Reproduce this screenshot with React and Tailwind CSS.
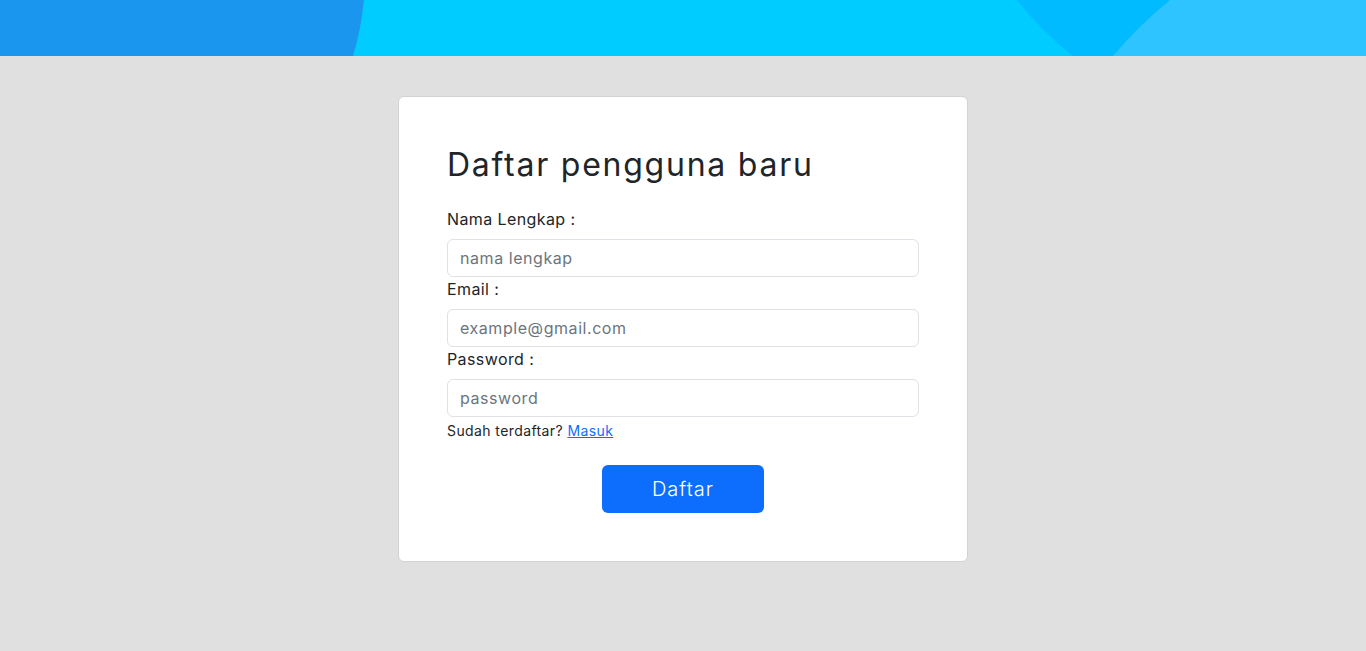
import React, { useState } from 'react';

const HeaderBanner = () => (
  <div className="h-14 w-full bg-[#00ccff] overflow-hidden">
    <svg width="100%" height="56" viewBox="0 0 1366 56" preserveAspectRatio="none" className="block">
      <path d="M0 0 H364 Q361 30 353 56 H0 Z" fill="#1a96ee" />
      <path d="M1017 0 Q1042 32 1073 56 H1366 V0 Z" fill="#00bbff" />
      <path d="M1170 0 Q1138 26 1113 56 H1366 V0 Z" fill="#2ec4ff" />
    </svg>
  </div>
);

const Field = ({ label, type, placeholder, value, onChange }) => (
  <div>
    <label className="block text-[16px] leading-6 mb-2 text-[#212529]">{label}</label>
    <input
      type={type}
      value={value}
      onChange={onChange}
      placeholder={placeholder}
      className="block w-full h-[38px] px-3 rounded-[6px] border border-[#dee2e6] bg-white text-[16px] text-[#212529] placeholder-[#6c757d] outline-none tracking-[0.035em]"
    />
  </div>
);

export default function App() {
  const [form, setForm] = useState({ nama: '', email: '', password: '' });

  const set = (key) => (e) => setForm((f) => ({ ...f, [key]: e.target.value }));

  return (
    <div className="min-h-[651px] bg-[#e0e0e0] font-['Inter','Open_Sans',sans-serif] text-[#212529] tracking-[0.025em]">
      <HeaderBanner />

      <div className="flex justify-center pt-10">
        <div className="w-[570px] bg-white border border-[#d3d3d3] rounded-[6px] p-12">
          <h1 className="text-[32px] leading-[40px] font-normal tracking-[0.055em] mb-[22px]">Daftar pengguna baru</h1>

          <Field label="Nama Lengkap :" type="text" placeholder="nama lengkap" value={form.nama} onChange={set('nama')} />
          <Field label="Email :" type="email" placeholder="example@gmail.com" value={form.email} onChange={set('email')} />
          <Field label="Password :" type="password" placeholder="password" value={form.password} onChange={set('password')} />

          <p className="text-[14px] leading-[21px] mt-[3px]">
            Sudah terdaftar? <a href="#" className="text-[#0d6efd] underline">Masuk</a>
          </p>

          <div className="flex justify-center mt-6">
            <button className="w-[162px] h-12 rounded-[6px] bg-[#0d6efd] text-white text-[20px] font-light tracking-[0.05em]">
              Daftar
            </button>
          </div>
        </div>
      </div>
    </div>
  );
}
